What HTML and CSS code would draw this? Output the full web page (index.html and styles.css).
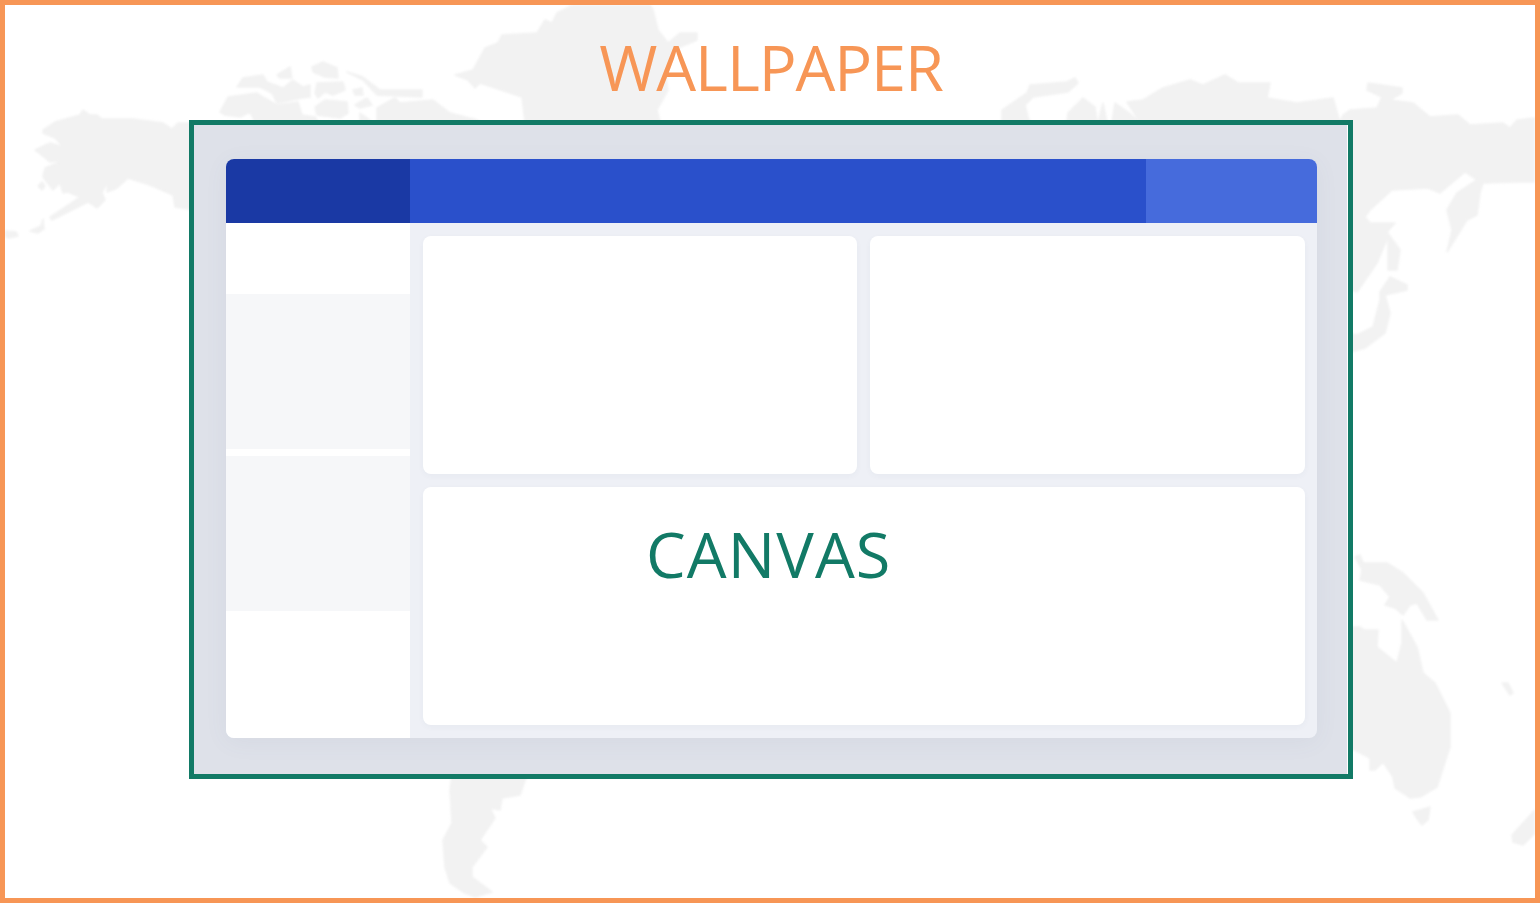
FILE: index.html
```html
<!DOCTYPE html>
<html lang="en">
<head>
<meta charset="utf-8">
<title>Wallpaper and canvas</title>
<link rel="stylesheet" href="styles.css">
</head>
<body>
<div class="page">
  <svg class="map" viewBox="5 5 1530 893" aria-hidden="true">
    <path d="M43 130L55 122L80 115L83 110L90 115L97 115L102 119L133 119L163 123L172 129L178 123L195 123L195 210L175 207L173 195L150 185L128 178L117 188L107 192L108 182L102 192L105 200L97 208L88 202L52 220L50 217L80 197L68 192L63 193L60 183L53 190L43 177L45 168L65 160L50 162L35 150L50 143L63 147L55 138L43 133Z"/>
    <path d="M38 186L42 182L45 186L42 190Z"/>
    <path d="M30 231L41 226L43 219L44 229L38 233Z"/>
    <path d="M5 231L16 232L18 236L8 238L5 236Z"/>
    <path d="M237 87L243 78L263 75L267 82L283 88L293 80L303 87L310 85L310 97L302 98L277 103L272 93L260 87Z"/>
    <path d="M220 112L228 97L257 93L263 97L277 105L298 102L302 115L315 117L318 122L255 122L250 112L240 117L225 115Z"/>
    <path d="M277 75L290 67L292 78L280 78Z"/>
    <path d="M312 67L323 62L337 68L338 78L325 77L313 72Z"/>
    <path d="M317 83L343 82L345 90L333 95L325 92L318 98L315 93Z"/>
    <path d="M315 107L325 100L347 102L348 113L340 118L317 115Z"/>
    <path d="M347 72L363 77L380 90L422 90L422 97L377 95L363 80Z"/>
    <path d="M353 90L362 88L363 95L355 95Z"/>
    <path d="M355 105L367 98L372 105L360 108Z"/>
    <path d="M360 113L370 120L360 122Z"/>
    <path d="M377 108L395 98L400 103L433 100L450 113L477 120L480 122L377 122Z"/>
    <path d="M455 75L473 70L485 48L498 43L502 35L537 33L545 20L552 23L557 13L573 5L650 5L653 10L658 30L668 43L680 33L697 33L697 40L673 50L665 70L668 90L657 110L660 122L525 122L522 97L507 92L480 83L475 88L468 80Z"/>
    <path d="M1002 110L1027 93L1030 85L1067 82L1075 78L1078 83L1068 92L1033 97L1025 105L1028 117L1030 122L1002 122Z"/>
    <path d="M1067 122L1068 113L1083 98L1095 107L1097 122Z"/>
    <path d="M1098 122L1103 103L1107 122Z"/>
    <path d="M1112 122L1115 103L1128 112L1140 122Z"/>
    <path d="M1127 102L1143 100L1163 88L1190 80L1203 85L1225 75L1238 83L1270 83L1267 98L1297 103L1333 98L1340 122L1140 122Z"/>
    <path d="M1340 122L1343 115L1350 110L1377 108L1382 97L1367 90L1368 83L1402 88L1402 93L1390 100L1413 103L1430 117L1458 115L1470 125L1503 123L1510 128L1517 120L1535 118L1535 182L1517 182L1483 183L1480 193L1477 215L1467 220L1447 252L1452 230L1447 210L1457 193L1477 180L1465 172L1440 193L1428 188L1392 190L1370 210L1365 217L1370 223L1395 223L1387 232L1400 250L1397 270L1388 270L1388 237L1377 263L1357 292L1347 288L1340 300Z"/>
    <path d="M1380 292L1390 277L1407 285L1407 290L1385 295L1390 313L1385 333L1365 348L1347 353L1340 350L1343 332L1357 335L1373 327L1380 300Z"/>
    <path d="M1355 557L1360 555L1363 563L1387 563L1403 573L1423 593L1438 620L1427 620L1417 603L1410 605L1403 615L1395 608L1385 605L1390 597L1380 585L1360 580L1362 570Z"/>
    <path d="M1345 627L1360 627L1364 630L1378 630L1377 647L1397 663L1402 643L1402 620L1417 647L1423 673L1435 683L1450 713L1450 747L1437 787L1420 797L1410 798L1395 788L1393 777L1383 762L1375 770L1370 770L1370 758L1345 745Z"/>
    <path d="M1413 812L1430 807L1428 820L1422 825L1418 820Z"/>
    <path d="M1502 683L1508 683L1513 693L1510 695Z"/>
    <path d="M1535 810L1535 833L1523 845L1513 842L1512 835Z"/>
    <path d="M452 775L527 775L520 795L502 798L500 810L490 808L495 818L480 840L487 847L472 867L472 877L492 892L475 897L463 892L450 883L445 867L443 840L452 823L450 790Z"/>
  </svg>
  <h1 class="wallpaper-label">WALLPAPER</h1>
  <section class="frame">
    <div class="frame-fill">
      <div class="app">
        <header class="app-header">
          <div class="brand"></div>
          <div class="topbar"></div>
          <div class="user"></div>
        </header>
        <div class="app-body">
          <nav class="sidebar">
            <div class="side-top"></div>
            <div class="side-group"></div>
            <div class="side-group"></div>
          </nav>
          <main class="content">
            <div class="panel"></div>
            <div class="panel"></div>
            <div class="panel panel-wide"><span class="canvas-label">CANVAS</span></div>
          </main>
        </div>
      </div>
    </div>
  </section>
</div>
</body>
</html>
```

FILE: styles.css
```css
* {
  box-sizing: border-box;
}

html,
body {
  margin: 0;
  height: 100%;
}

body {
  background: #fff;
  font-family: "Open Sans", "Lato", sans-serif;
  overflow: hidden;
}

.page {
  position: relative;
  width: 1540px;
  height: 903px;
  border: 5px solid #f79656;
  background: #fff;
  overflow: hidden;
}

.map {
  position: absolute;
  left: 0;
  top: 0;
  width: 1530px;
  height: 893px;
  fill: #f2f2f2;
  stroke: #f2f2f2;
  stroke-width: 1.5;
  stroke-linejoin: round;
  filter: blur(0.8px);
}

.wallpaper-label {
  position: relative;
  height: 115px;
  margin: 0;
  padding: 24px 0 0 2px;
  text-align: center;
  color: #f79656;
  font-size: 63px;
  font-weight: 400;
  line-height: 76px;
  letter-spacing: -1.1px;
}

.frame {
  position: relative;
  width: 1164px;
  height: 659px;
  margin-left: 184px;
  border: 5px solid #127a66;
  background: #fff;
}

.frame-fill {
  display: flow-root;
  height: 100%;
  margin: 0 1px 1px 0;
  padding: 34px 30px 35px 32px;
  background: #dee1e9;
}

.app {
  display: flex;
  flex-direction: column;
  height: 579px;
  border-radius: 8px;
  overflow: hidden;
  background: #eef0f6;
  box-shadow: 0 4px 24px rgba(90, 100, 140, 0.06);
}

.app-header {
  display: flex;
  flex: none;
  height: 64px;
}

.brand {
  flex: none;
  width: 184px;
  background: #1a39a4;
}

.topbar {
  flex: 1;
  background: #2a50cb;
}

.user {
  flex: none;
  width: 171px;
  background: #466bdc;
}

.app-body {
  display: flex;
  flex: 1;
}

.sidebar {
  flex: none;
  display: flex;
  flex-direction: column;
  gap: 7px;
  width: 184px;
  background: #fff;
}

.side-top {
  height: 64px;
}

.side-group {
  height: 155px;
  background: #f6f7f9;
}

.content {
  flex: 1;
  display: grid;
  grid-template-columns: 434px 435px;
  grid-template-rows: 238px 238px;
  gap: 13px;
  padding: 13px 12px 13px 13px;
}

.panel {
  border-radius: 8px;
  background: #fff;
  box-shadow: 0 2px 6px rgba(60, 70, 110, 0.04);
}

.panel-wide {
  grid-column: 1 / 3;
  padding: 29px 0 0 223px;
}

.canvas-label {
  display: block;
  color: #127a66;
  font-size: 63px;
  font-weight: 400;
  line-height: 76px;
  letter-spacing: 1.1px;
}
```
